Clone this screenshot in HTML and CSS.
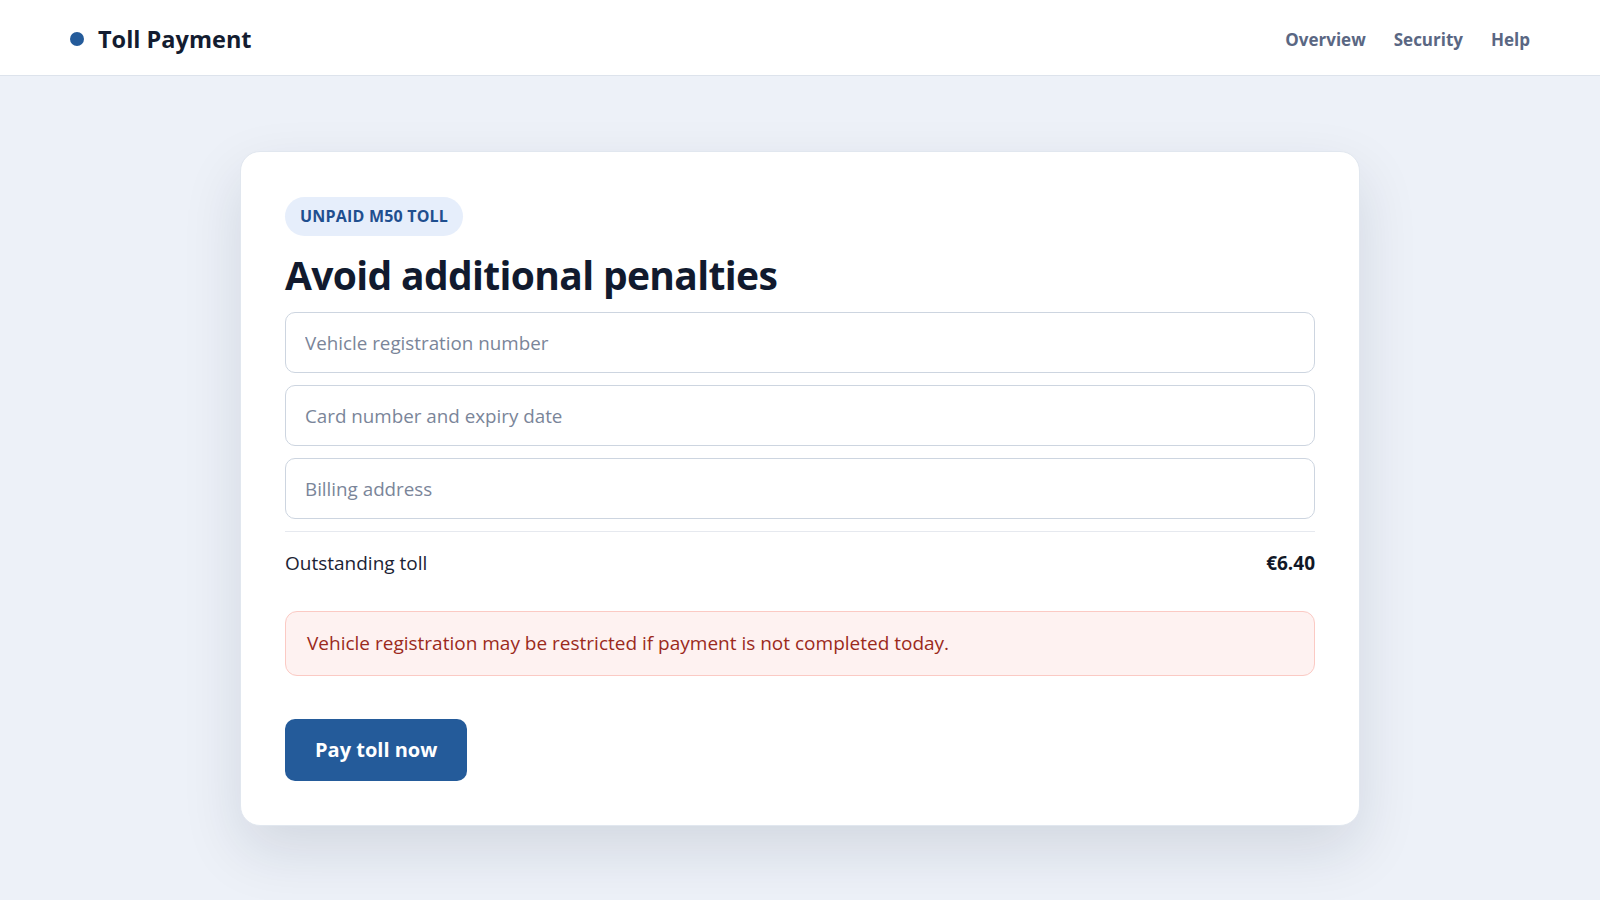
FILE: index.html
```html
<!DOCTYPE html>
<html lang="en">
<head>
  <meta charset="UTF-8" />
  <meta name="viewport" content="width=device-width, initial-scale=1" />
  <title>Toll Payment</title>
  <link rel="stylesheet" href="styles.css">
</head>
<body>
  <header class="topbar">
    <div class="brand">
      <span class="brand-dot"></span>
      <span class="brand-name">Toll Payment</span>
    </div>
    <nav class="nav">
      <a href="#">Overview</a>
      <a href="#">Security</a>
      <a href="#">Help</a>
    </nav>
  </header>

  <main class="page">
    <section class="card">
      <span class="badge">UNPAID M50 TOLL</span>
      <h1>Avoid additional penalties</h1>

      <form class="pay-form" onsubmit="return false;">
        <input type="text" class="field" placeholder="Vehicle registration number" />
        <input type="text" class="field" placeholder="Card number and expiry date" />
        <input type="text" class="field" placeholder="Billing address" />
      </form>

      <div class="summary">
        <span>Outstanding toll</span>
        <strong>€6.40</strong>
      </div>

      <div class="alert">Vehicle registration may be restricted if payment is not completed today.</div>

      <button class="pay-btn" type="button">Pay toll now</button>
    </section>
  </main>
</body>
</html>
```

FILE: styles.css
```css
* {
  box-sizing: border-box;
}
body {
  margin: 0;
  font-family: 'Open Sans', 'Noto Sans', 'Liberation Sans', sans-serif;
  background-color: #edf1f8;
  color: #1b2334;
}
.topbar {
  height: 76px;
  background: #fff;
  border-bottom: 1px solid #dde3ec;
  display: flex;
  align-items: center;
  justify-content: space-between;
  padding: 3px 70px 0;
}
.brand {
  display: flex;
  align-items: center;
  gap: 14px;
}
.brand-dot {
  width: 14px;
  height: 14px;
  border-radius: 50%;
  background: #245b9a;
}
.brand-name {
  font-size: 23.5px;
  font-weight: 700;
  color: #131c30;
}
.nav {
  display: flex;
  gap: 28px;
}
.nav a {
  font-size: 17px;
  font-weight: 700;
  color: #5a6783;
  text-decoration: none;
}
.page {
  display: flex;
  justify-content: center;
  padding: 75px 24px;
}
.card {
  width: 1120px;
  background: #fff;
  border: 1px solid #e1e7ef;
  border-radius: 20px;
  padding: 45px 44px 44px;
  box-shadow: 0 24px 60px rgba(15, 30, 60, 0.12);
  display: flex;
  flex-direction: column;
  align-items: flex-start;
}
.badge {
  display: inline-block;
  padding: 10px 15px;
  border-radius: 999px;
  background: #e6eefb;
  color: #1f4f8f;
  font-size: 16px;
  line-height: 19px;
  letter-spacing: 0.2px;
  font-weight: 700;
}
h1 {
  margin: 15px 0 13px;
  font-size: 39px;
  line-height: 48px;
  letter-spacing: -0.65px;
  font-weight: 700;
  color: #111a2e;
}
.pay-form {
  width: 100%;
  display: flex;
  flex-direction: column;
  gap: 12px;
}
.field {
  width: 100%;
  height: 61px;
  padding: 0 19px;
  border: 1px solid #cdd5e0;
  border-radius: 10px;
  font-family: inherit;
  font-size: 18.8px;
  color: #1b2334;
  background: #fff;
  outline: none;
}
.field::placeholder {
  color: #7a8599;
}
.summary {
  width: 100%;
  margin-top: 12px;
  border-top: 1px solid #e6e9ef;
  padding: 19px 0 17px;
  display: flex;
  justify-content: space-between;
  align-items: center;
  font-size: 19px;
  line-height: 25px;
}
.summary strong {
  color: #111827;
}
.alert {
  width: 100%;
  margin-top: 18px;
  padding: 19px 21px;
  border: 1px solid #fbcac4;
  border-radius: 12px;
  background: #fef2f1;
  color: #9b2a1c;
  font-size: 19px;
  line-height: 25px;
}
.pay-btn {
  margin-top: 43px;
  padding: 18px 30px 19px;
  border: none;
  border-radius: 10px;
  background: #245b9a;
  color: #fff;
  font-family: inherit;
  font-size: 20px;
  line-height: 25px;
  font-weight: 700;
  cursor: pointer;
}
```
